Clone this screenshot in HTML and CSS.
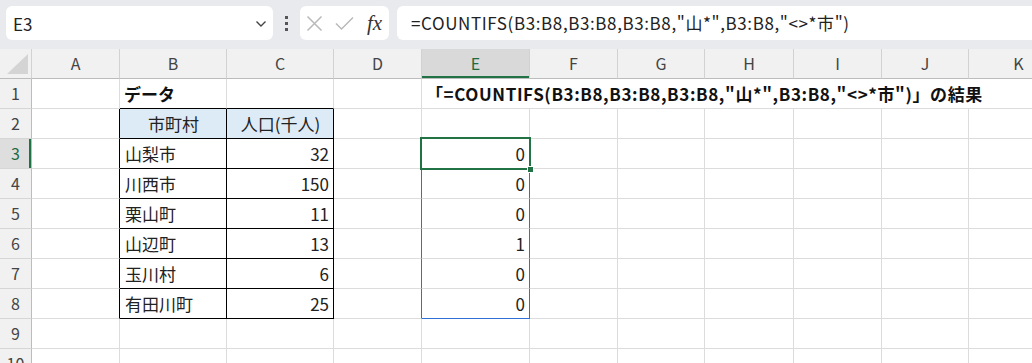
FILE: index.html
```html
<!DOCTYPE html>
<html lang="ja">
<head>
    <meta charset="UTF-8">
    <title>COUNTIFS</title>
    <link rel="stylesheet" href="styles.css">
</head>
<body>
    <div class="toolbar">
        <div class="namebox">
            <span>E3</span>
            <svg class="chev" width="12" height="8" viewBox="0 0 12 8"><polyline points="1.5,1.5 6,6 10.5,1.5" fill="none" stroke="#444" stroke-width="1.4"/></svg>
        </div>
        <div class="grip"><i></i><i></i><i></i></div>
        <div class="fnbtns">
            <svg width="17" height="17" viewBox="0 0 17 17"><path d="M1.5 1.5 L15.5 15.5 M15.5 1.5 L1.5 15.5" stroke="#b9b9b9" stroke-width="1.5"/></svg>
            <svg width="19" height="15" viewBox="0 0 19 15"><polyline points="1,7.5 6.5,13 18,1.5" fill="none" stroke="#b9b9b9" stroke-width="1.5"/></svg>
            <span class="fx">fx</span>
        </div>
        <div class="formula">=COUNTIFS(B3:B8,B3:B8,B3:B8,"山*",B3:B8,"&lt;&gt;*市")</div>
    </div>

    <table class="sheet">
        <colgroup>
            <col class="w-rh">
            <col class="w-88">
            <col class="w-107">
            <col class="w-107">
            <col class="w-88">
            <col class="w-108">
            <col class="w-88">
            <col class="w-87">
            <col class="w-89">
            <col class="w-88">
            <col class="w-87">
            <col class="w-100">
        </colgroup>
        <thead>
            <tr>
                <th class="corner"><span class="tri"></span></th>
                <th>A</th><th>B</th><th>C</th><th>D</th><th class="on">E</th>
                <th>F</th><th>G</th><th>H</th><th>I</th><th>J</th><th>K</th>
            </tr>
        </thead>
        <tbody>
            <tr>
                <th>1</th>
                <td></td>
                <td class="fb title">データ</td>
                <td class="fb"></td>
                <td></td>
                <td class="title wide" colspan="7">「=COUNTIFS(B3:B8,B3:B8,B3:B8,"山*",B3:B8,"&lt;&gt;*市")」の結果</td>
            </tr>
            <tr>
                <th>2</th>
                <td class="fr"></td>
                <td class="d head">市町村</td>
                <td class="d head">人口(千人)</td>
                <td></td><td></td><td></td><td></td><td></td><td></td><td></td><td></td>
            </tr>
            <tr>
                <th class="on">3</th>
                <td class="fr"></td>
                <td class="d">山梨市</td>
                <td class="d num">32</td>
                <td class="br"></td>
                <td class="br num cur"><span class="cursor"><span class="handle"></span></span>0</td>
                <td></td><td></td><td></td><td></td><td></td><td></td>
            </tr>
            <tr>
                <th>4</th>
                <td class="fr"></td>
                <td class="d">川西市</td>
                <td class="d num">150</td>
                <td class="br"></td>
                <td class="br num">0</td>
                <td></td><td></td><td></td><td></td><td></td><td></td>
            </tr>
            <tr>
                <th>5</th>
                <td class="fr"></td>
                <td class="d">栗山町</td>
                <td class="d num">11</td>
                <td class="br"></td>
                <td class="br num">0</td>
                <td></td><td></td><td></td><td></td><td></td><td></td>
            </tr>
            <tr>
                <th>6</th>
                <td class="fr"></td>
                <td class="d">山辺町</td>
                <td class="d num">13</td>
                <td class="br"></td>
                <td class="br num">1</td>
                <td></td><td></td><td></td><td></td><td></td><td></td>
            </tr>
            <tr>
                <th>7</th>
                <td class="fr"></td>
                <td class="d">玉川村</td>
                <td class="d num">6</td>
                <td class="br"></td>
                <td class="br num">0</td>
                <td></td><td></td><td></td><td></td><td></td><td></td>
            </tr>
            <tr>
                <th>8</th>
                <td class="fr"></td>
                <td class="d">有田川町</td>
                <td class="d num">25</td>
                <td class="br"></td>
                <td class="br bb num">0</td>
                <td></td><td></td><td></td><td></td><td></td><td></td>
            </tr>
            <tr>
                <th>9</th>
                <td></td><td></td><td></td><td></td><td></td><td></td><td></td><td></td><td></td><td></td><td></td>
            </tr>
            <tr>
                <th>10</th>
                <td></td><td></td><td></td><td></td><td></td><td></td><td></td><td></td><td></td><td></td><td></td>
            </tr>
        </tbody>
    </table>
</body>
</html>
```

FILE: styles.css
```css
body {
    margin: 0;
    width: 1032px;
    height: 363px;
    overflow: hidden;
    background: #fff;
    font-family: "Noto Sans CJK JP", "Noto Sans", sans-serif;
    color: #222;
}

/* formula bar */
.toolbar {
    display: flex;
    align-items: flex-start;
    height: 49px;
    padding: 6px 0 0 6px;
    box-sizing: border-box;
    background: #e8eaee;
}
.namebox {
    width: 267px;
    height: 34px;
    box-sizing: border-box;
    padding: 0 6px 0 7px;
    display: flex;
    align-items: center;
    justify-content: space-between;
    background: #fff;
    border-radius: 6px;
    font-size: 17px;
}
.chev {
    margin-top: 2px;
}
.grip {
    width: 27px;
    height: 34px;
    display: flex;
    flex-direction: column;
    align-items: center;
    justify-content: center;
    gap: 3px;
}
.grip i {
    width: 3px;
    height: 3px;
    background: #555;
}
.fnbtns {
    width: 89px;
    height: 34px;
    box-sizing: border-box;
    padding: 0 4px 0 6px;
    display: flex;
    align-items: center;
    gap: 12px;
    background: #fff;
    border-radius: 6px;
}
.fx {
    font-family: "Liberation Serif", serif;
    font-style: italic;
    font-size: 21px;
    color: #333;
    margin-left: 1px;
}
.formula {
    flex: 1;
    height: 34px;
    margin-left: 8px;
    padding-left: 14px;
    background: #fff;
    border-radius: 6px 0 0 6px;
    font-size: 17px;
    line-height: 34px;
    letter-spacing: 0.6px;
    white-space: nowrap;
}

/* sheet grid */
.sheet {
    border-collapse: separate;
    border-spacing: 0;
    table-layout: fixed;
    width: 1067px;
}
.w-rh { width: 32px; }
.w-87 { width: 87px; }
.w-88 { width: 88px; }
.w-89 { width: 89px; }
.w-100 { width: 100px; }
.w-107 { width: 107px; }
.w-108 { width: 108px; }

.sheet th,
.sheet td {
    height: 29px;
    padding: 0 4px;
    border-right: 1px solid #dcdcdc;
    border-bottom: 1px solid #dcdcdc;
    font-size: 17px;
    line-height: 29px;
    white-space: nowrap;
    overflow: visible;
}
.sheet th {
    background: #f1f1f1;
    font-weight: normal;
    font-size: 16px;
    color: #444;
    text-align: center;
    padding: 0;
}
.sheet thead th {
    border-right-color: #d2d2d2;
    border-bottom-color: #bcbcbc;
}
.sheet tbody th {
    border-right-color: #bcbcbc;
    border-bottom-color: #d6d6d6;
}
.sheet thead th.on {
    background: #d9d9d9;
    color: #1e6b40;
    box-shadow: inset 0 -2px 0 #217346;
}
.sheet tbody th.on {
    background: #dedede;
    color: #1e6b40;
    box-shadow: inset -2px 0 0 #217346;
}
.corner {
    position: relative;
}
.tri {
    position: absolute;
    right: 3px;
    bottom: 4px;
    width: 0;
    height: 0;
    border-left: 21px solid transparent;
    border-bottom: 20px solid #d4d4d4;
}

.title {
    font-weight: bold;
    padding-left: 2px;
    color: #111;
}
.sheet td.wide {
    letter-spacing: 0.6px;
}
.sheet td.d {
    border-right-color: #000;
    border-bottom-color: #000;
    padding-left: 5px;
}
.sheet td.fr {
    border-right-color: #000;
}
.sheet td.fb {
    border-bottom-color: #000;
}
.sheet td.head {
    background: #ddebf7;
    text-align: center;
}
.sheet td.num {
    text-align: right;
}

/* selection */
.sheet td.br {
    border-right-color: #2f6fd6;
}
.sheet td.bb {
    border-bottom-color: #2f6fd6;
}
.cur {
    position: relative;
}
.cursor {
    position: absolute;
    left: -2px;
    top: -2px;
    right: -2px;
    bottom: -2px;
    border: 2px solid #217346;
}
.handle {
    position: absolute;
    right: -5px;
    bottom: -5px;
    width: 5px;
    height: 5px;
    background: #217346;
    border: 1px solid #fff;
}
```
